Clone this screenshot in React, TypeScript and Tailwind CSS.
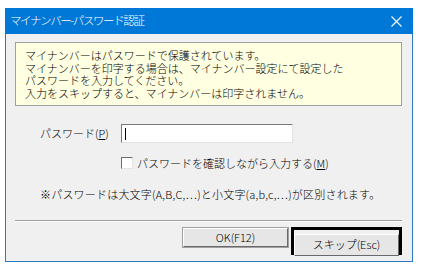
export default function App() {
  const font = { fontFamily: '"Noto Sans CJK JP", "Noto Sans", sans-serif' };
  return (
    <div className="w-[422px] h-[269px] bg-white pt-[8px] pl-[5px]" style={font}>
      <div className="w-[408px] h-[254px] flex flex-col">
        {/* title bar */}
        <div className="h-[26px] bg-[#0078d7] flex items-center justify-between pl-[5px] pr-[10px] shrink-0">
          <span className="text-white text-[11.5px] tracking-[-1.4px] leading-none font-light">
            マイナンバー-パスワード認証
          </span>
          <svg width="11" height="11" viewBox="0 0 11 11" className="mr-[1px]">
            <path d="M0.5 0.5 L10.5 10.5 M10.5 0.5 L0.5 10.5" stroke="#ffffff" strokeWidth="1.1" />
          </svg>
        </div>

        {/* client area */}
        <div className="flex-1 bg-[#f0f0f0] border-x border-b border-[#2b7bc7] flex flex-col font-light">
          <div className="ml-[9px] mt-[8px] w-[387px] h-[64px] bg-[#ffffe1] border border-[#a0a0a0] pl-[9px] pt-[6px] text-[11px] leading-[12.5px] text-black">
            <p>マイナンバーはパスワードで保護されています。</p>
            <p>マイナンバーを印字する場合は、マイナンバー設定にて設定した</p>
            <p>パスワードを入力してください。</p>
            <p>入力をスキップすると、マイナンバーは印字されません。</p>
          </div>

          <div className="flex items-center mt-[18px] ml-[34px]">
            <span className="w-[81px] text-[11px] text-black leading-none">
              パスワード(<span className="underline">P</span>)
            </span>
            <div className="w-[172px] h-[19px] bg-white border-t border-l border-t-[#7a7a7a] border-l-[#7a7a7a] border-r border-b border-r-[#e3e3e3] border-b-[#e3e3e3] flex items-center pl-[3px]">
              <div className="w-[1px] h-[12px] bg-black" />
            </div>
          </div>

          <div className="flex items-center mt-[14px] ml-[115px]">
            <div className="w-[12px] h-[12px] bg-white border-t border-l border-t-[#6d6d6d] border-l-[#6d6d6d] border-r border-b border-r-[#e3e3e3] border-b-[#e3e3e3]" />
            <span className="ml-[4px] text-[11px] text-black leading-none">
              パスワードを確認しながら入力する(<span className="underline">M</span>)
            </span>
          </div>

          <p className="mt-[20px] ml-[34px] text-[11px] text-black leading-none tracking-[0.2px]">
            ※パスワードは大文字(A,B,C,…)と小文字(a,b,c,…)が区別されます。
          </p>

          <div className="mt-[20px] ml-[9px] w-[387px] border-t border-t-[#a0a0a0] border-b border-b-white" />

          <div className="flex items-start justify-end mt-[5px] mr-[10px] gap-[3px]">
            <button className="w-[105px] h-[19px] bg-[#e6e6e6] border border-t-white border-l-white border-r-[#696969] border-b-[#696969] shadow-[0_0_0_1px_#a0a0a0] text-[11px] leading-none text-black font-light mt-[1px]">
              OK(F12)
            </button>
            <div className="w-[111px] h-[28px] border-[3px] border-black">
              <button className="w-full h-full bg-[#e6e6e6] border border-t-white border-l-white border-r-[#696969] border-b-[#696969] text-[11px] leading-none text-black font-light">
                スキップ(Esc)
              </button>
            </div>
          </div>
        </div>
      </div>
    </div>
  );
}
